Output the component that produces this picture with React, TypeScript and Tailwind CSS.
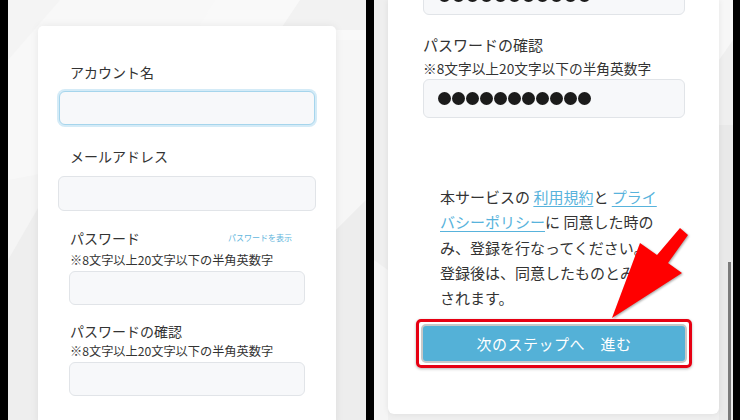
import React from "react";

const font = { fontFamily: '"Noto Sans CJK JP", "Noto Sans", sans-serif' };

const Field = ({ className }: { className: string }) => (
  <div className={"rounded-[6px] border border-[#e1e4e8] bg-[#f7f8fa] " + className} />
);

const LeftScreen = () => (
  <div className="relative w-[358px] h-[420px] overflow-hidden bg-[#eeeeee]">
    <svg className="absolute inset-0" width="358" height="420" viewBox="8 0 358 420">
      <polygon points="8,0 200,0 30,180 8,180" fill="#f4f4f4" />
      <polygon points="60,0 230,0 60,180 8,180 8,60" fill="#f8f8f8" />
      <polygon points="215,0 366,0 366,40 330,40 300,60 180,60" fill="#f9f9f9" />
      <polygon points="300,0 366,0 366,30 280,30" fill="#f2f2f2" />
      <polygon points="8,180 60,170 8,260" fill="#f5f5f5" />
      <polygon points="336,40 366,40 366,200 336,230" fill="#f6f6f6" />
      <polygon points="336,230 366,200 366,420 336,420" fill="#ededed" />
    </svg>
    <div className="relative mt-[26px] ml-[30px] w-[298px] h-[400px] rounded-t-[5px] bg-white shadow-[0_0_8px_rgba(0,0,0,0.07)] flex flex-col text-[#333]">
      <div className="pt-[36px] pl-[32px] text-[14px] leading-[20px]">アカウント名</div>
      <div className="mt-[9px] ml-[21px] w-[256px] h-[34px] rounded-[6px] border border-[#a6d5ec] bg-[#f7f8fa] shadow-[0_0_0_2px_#d4ebf7]" />
      <div className="mt-[21px] pl-[32px] text-[14px] leading-[20px]">メールアドレス</div>
      <Field className="mt-[10px] ml-[20px] w-[258px] h-[35px]" />
      <div className="mt-[17px] pl-[32px] pr-[44px] flex items-center justify-between">
        <span className="text-[14px] leading-[20px]">パスワード</span>
        <span className="text-[8px] leading-[10px] text-[#62b6dd]">パスワードを表示</span>
      </div>
      <div className="mt-[4px] pl-[32px] text-[12.2px] leading-[16px]">※8文字以上20文字以下の半角英数字</div>
      <Field className="mt-[3px] ml-[31px] w-[236px] h-[34px]" />
      <div className="mt-[16px] pl-[32px] text-[14px] leading-[20px]">パスワードの確認</div>
      <div className="mt-[2px] pl-[32px] text-[12.2px] leading-[16px]">※8文字以上20文字以下の半角英数字</div>
      <Field className="mt-[3px] ml-[31px] w-[236px] h-[34px]" />
    </div>
  </div>
);

const Dots = () => (
  <div className="flex items-center gap-[1px]">
    {Array.from({ length: 11 }).map((_, i) => (
      <span key={i} className="w-[13px] h-[13px] rounded-full bg-[#1b1b1b]" />
    ))}
  </div>
);

const Link = ({ children }: { children: React.ReactNode }) => (
  <span className="text-[#58b3dc] underline decoration-1 underline-offset-[3px]">{children}</span>
);

const RightScreen = () => (
  <div className="relative w-[359px] h-[420px] overflow-hidden bg-[#efefef]">
    <svg className="absolute inset-0" width="359" height="420" viewBox="374 0 359 420">
      <polygon points="719,0 733,0 733,40 719,60" fill="#f7f7f7" />
      <polygon points="719,125 733,125 733,420 719,420" fill="#e9e9e9" />
      <polygon points="374,260 388,270 388,420 374,420" fill="#f5f5f5" />
      <rect x="728" y="262" width="3" height="158" fill="#7b7b7b" />
    </svg>
    <div className="relative ml-[14px] w-[331px] h-[414px] rounded-b-[6px] bg-white shadow-[0_0_6px_rgba(0,0,0,0.08)] flex flex-col text-[#333]">
      <div className="-mt-[24px] ml-[35px] w-[262px] h-[39px] rounded-[6px] border border-[#e1e4e8] bg-[#f7f8fa] pl-[14px] flex items-center">
        <Dots />
      </div>
      <div className="mt-[19px] ml-[35px] text-[15px] leading-[22px]">パスワードの確認</div>
      <div className="mt-[3px] ml-[35px] text-[13.7px] leading-[18px]">※8文字以上20文字以下の半角英数字</div>
      <div className="mt-[2px] ml-[35px] w-[262px] h-[39px] rounded-[6px] border border-[#e1e4e8] bg-[#f7f8fa] pl-[14px] flex items-center">
        <Dots />
      </div>
      <div className="mt-[66px] ml-[52px] text-[15px] leading-[25.3px] whitespace-nowrap">
        本サービスの <Link>利用規約</Link>と <Link>プライ</Link>
        <br />
        <Link>バシーポリシー</Link>に 同意した時の
        <br />
        み、登録を行なってください。
        <br />
        登録後は、同意したものとみな
        <br />
        されます。
      </div>
      <div className="mt-[9px] ml-[28px] w-[276px] h-[49px] rounded-[5px] border-[3px] border-[#e60012] p-[2px] shadow-[0_1px_3px_rgba(0,0,0,0.3)]">
        <div className="h-full rounded-[5px] border-2 border-[#c8c8c8] bg-[#54b1d7] flex items-center justify-center text-white text-[15px] tracking-[0.5px]">
          次のステップへ　進む
        </div>
      </div>
    </div>
    <svg className="absolute inset-0 pointer-events-none" width="359" height="420" viewBox="374 0 359 420">
      <polygon
        points="612,318 640,243 657,255 680,228 688,235 668,263 682,273"
        fill="#ff0000"
        style={{ filter: "drop-shadow(1px 1px 1px rgba(0,0,0,0.35))" }}
      />
    </svg>
  </div>
);

export default function App() {
  return (
    <div className="w-[740px] h-[420px] bg-black flex gap-[8px] pl-[8px] overflow-hidden" style={font}>
      <LeftScreen />
      <RightScreen />
    </div>
  );
}
